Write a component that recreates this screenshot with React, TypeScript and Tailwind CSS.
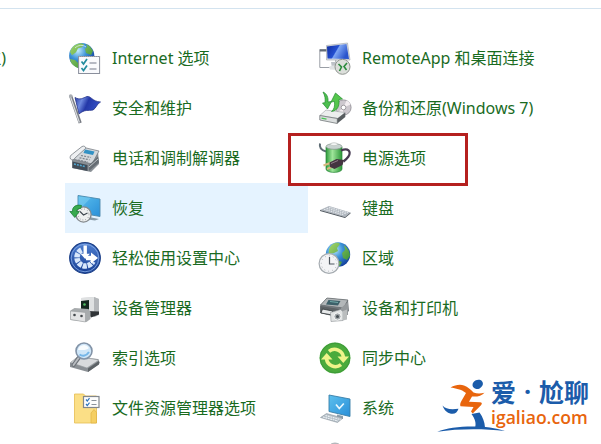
import type { ReactNode } from "react";

type Item = { label: string; icon: ReactNode; active?: boolean };

function Defs() {
  return (
    <svg className="absolute h-0 w-0" aria-hidden="true">
      <defs>
        <radialGradient id="ocean" cx="35%" cy="30%" r="75%">
          <stop offset="0" stopColor="#c4ecfc" />
          <stop offset="0.45" stopColor="#3d94d8" />
          <stop offset="1" stopColor="#123f9c" />
        </radialGradient>
        <linearGradient id="land" x1="0" y1="0" x2="1" y2="1">
          <stop offset="0" stopColor="#a5d66b" />
          <stop offset="1" stopColor="#2f8a35" />
        </linearGradient>
        <linearGradient id="flag" x1="0" y1="0" x2="1" y2="0.3">
          <stop offset="0" stopColor="#2338a0" />
          <stop offset="0.3" stopColor="#6f8be0" />
          <stop offset="0.55" stopColor="#2438a8" />
          <stop offset="1" stopColor="#3450c4" />
        </linearGradient>
        <linearGradient id="screen" x1="0" y1="0" x2="1" y2="1">
          <stop offset="0" stopColor="#5cc0ee" />
          <stop offset="1" stopColor="#2a8fd8" />
        </linearGradient>
        <linearGradient id="remote" x1="0" y1="0" x2="1" y2="0.4">
          <stop offset="0" stopColor="#0f2b9c" />
          <stop offset="0.5" stopColor="#2450d2" />
          <stop offset="0.55" stopColor="#7ea6f4" />
          <stop offset="1" stopColor="#2a55cc" />
        </linearGradient>
        <linearGradient id="cell" x1="0" y1="0" x2="1" y2="0">
          <stop offset="0" stopColor="#2c9a3a" />
          <stop offset="0.4" stopColor="#9fe59a" />
          <stop offset="1" stopColor="#2c9638" />
        </linearGradient>
        <linearGradient id="access" x1="0" y1="0" x2="0" y2="1">
          <stop offset="0" stopColor="#4f7fd0" />
          <stop offset="1" stopColor="#173f94" />
        </linearGradient>
      </defs>
    </svg>
  );
}

function Icon({ children }: { children: ReactNode }) {
  return (
    <svg viewBox="0 0 32 32" className="h-8 w-8 shrink-0 overflow-visible" fill="none">
      {children}
    </svg>
  );
}

const internet = (
  <Icon>
    <circle cx="12.700" cy="13.700" r="12.600" fill="url(#ocean)" />
    <path d="M1 10C3 4 7 1.6 12 1.2l3 1-2 3-4 1-2 4-4 3zM17 2l4 2.5 3 4.5-2 4-5-2-1-4 2-2zM1 17l5 1 4 4-1 4C4 24 1.500 21 1 17z" fill="url(#land)" />
    <path d="M6 6c3-3 8-3.500 11-1" stroke="#e2f6fc" strokeWidth="1" opacity="0.7" />
    <rect x="9.600" y="14.500" width="21" height="17" fill="#f9fafd" stroke="#8a8f9c" />
    <path d="M10 14.500h21" stroke="#a3a7b2" strokeDasharray="1 1" />
    <path d="M12.500 19.500l2 2.500 3.500-5M12.500 26l2 2.500 3.500-5" stroke="#238c9e" strokeWidth="1.700" />
    <path d="M20.500 21h7M20.500 27h7" stroke="#73798a" />
  </Icon>
);

const flag = (
  <Icon>
    <path d="M6 5.500c5 3 8 .5 12-1 4-.8 5 5 13.500 5.500-4 2-4 6-7.500 8-5 1-8-1-14 4z" fill="url(#flag)" stroke="#24338c" strokeWidth="0.800" />
    <path d="M1.700 4l9.500 27" stroke="#777b83" strokeWidth="3.200" />
    <path d="M1.400 4.500l9 26" stroke="#d9dcdf" strokeWidth="1.200" />
    <circle cx="1.700" cy="4" r="1.800" fill="#a9adb3" />
  </Icon>
);

const phone = (
  <Icon>
    <path d="M3 18l9-12 17 3 1 13-8 8-19-4z" fill="#8a9096" />
    <path d="M4 17L13 5l17 4-7 13z" fill="#d4d8dc" stroke="#70767d" strokeWidth="0.700" />
    <path d="M1.500 17c-1-2 0-4 2-5L13 4.500c2-1 4 0 3.500 2L6 16c-1 2-3 2.500-4.500 1z" fill="#eef0f2" stroke="#777d84" strokeWidth="0.800" />
    <path d="M16 7.500l9.500 2-1.500 3.500-9.500-2z" fill="#3291c4" />
    <path d="M12 13.500l10 2M10.500 15.800l10 2M9 18l10 2" stroke="#7c848c" strokeWidth="1.200" strokeDasharray="2 1.200" />
    <path d="M3.500 19.500l15 3.500v6l-15-3z" fill="#414c57" />
    <path d="M5 22l11 2.500" stroke="#52a7d0" strokeWidth="1.500" strokeDasharray="2 1" />
    <path d="M20 23l9-8.500 1 6-10 8.500z" fill="#666d74" />
    <path d="M20 25l9-8" stroke="#bfc4c8" />
  </Icon>
);

const recovery = (
  <Icon>
    <path d="M9 3.500l22 3.500v17.500L9 20.500z" fill="url(#screen)" stroke="#4a88ac" strokeWidth="0.900" />
    <path d="M9.500 4.500v14L22 5.800z" fill="#8bd8f5" opacity="0.45" />
    <path d="M20 25l10 2-4 1.500-7-1z" fill="#889ba8" />
    <circle cx="14.500" cy="22.500" r="7.600" fill="#eef0f0" stroke="#858a8e" strokeWidth="1.400" />
    <circle cx="14.500" cy="22.500" r="5.500" stroke="#777c80" strokeWidth="1" strokeDasharray="0.700 2.200" />
    <path d="M11 19.500l3.500 3.500 4-2" stroke="#3d454d" strokeWidth="1.100" />
    <path d="M12.500 13.500C7 12 3 15 3.500 19.500H.8l5 6 4.500-6H7.800c0-2 1.500-3.200 4-3z" fill="#38aa4e" stroke="#16772f" strokeWidth="0.700" />
  </Icon>
);

const easeOfAccess = (
  <Icon>
    <circle cx="16" cy="16" r="15.300" fill="url(#access)" stroke="#183c86" strokeWidth="1.200" />
    <circle cx="16" cy="16" r="13.800" stroke="#8cb0ea" strokeWidth="0.800" />
    <path d="M12.500 8A8.500 8.500 0 1 0 24 19.500" stroke="#d9e8fb" strokeWidth="5.500" strokeDasharray="4 0.900" />
    <path d="M14.500 3.500h3.400v8.200h3L16.200 17l-4.700-5.300h3z" fill="#fff" />
    <path d="M17 13.700h5v-3.200l7 5.500-7 5.500v-3.200h-5z" fill="#fff" />
  </Icon>
);

const deviceManager = (
  <Icon>
    <path d="M12 6l13-1 5 2v16l-4 2-14-2z" fill="#c9ccce" />
    <path d="M25 5l5 2v15l-5 3z" fill="#b4b7ba" />
    <path d="M12 6l13-1v16l-13 2z" fill="#dfe1e2" />
    <path d="M12 9l8-1v10h-8z" fill="#14281e" />
    <circle cx="15.500" cy="12.500" r="1.300" fill="#4fbe62" />
    <path d="M18 19l12 .5v3l-8 3z" fill="#303437" />
    <path d="M1.500 18.500l4-2.500 14 1 2 3v7l-4 3-16-2z" fill="#a7abad" />
    <path d="M1.500 19l15 1.500v9.500l-15-2.500z" fill="#e3e4e5" stroke="#8e9294" strokeWidth="0.500" />
    <circle cx="5.500" cy="23" r="1.300" fill="#44494d" />
    <circle cx="12.500" cy="24" r="1.300" fill="#44494d" />
  </Icon>
);

const indexing = (
  <Icon>
    <path d="M1 21l8-6 20 2 2 4-12 9L1 25z" fill="#8b9095" />
    <path d="M1.500 20.500L9 14.500l21 3.500-12 8z" fill="#d9dbdd" stroke="#93989c" strokeWidth="0.600" />
    <path d="M19 26.500l11-7.500v3.500L19 30z" fill="#5d6266" />
    <path d="M10 15.500l-5.500 7.500" stroke="#6e7379" strokeWidth="4" strokeLinecap="round" />
    <path d="M9.500 16l-5 7" stroke="#b9bdc1" strokeWidth="1.800" strokeLinecap="round" />
    <circle cx="15" cy="9" r="8" fill="#cfe6f8" stroke="#8293a7" strokeWidth="1.600" />
    <path d="M9 8a6 6 0 0 1 11-2c-3 3-7 1.500-11 2z" fill="#fff" opacity="0.850" />
    <path d="M10.500 12.500c3 2 7 1.500 9.500-2.500" stroke="#75b6e8" strokeWidth="2" />
  </Icon>
);

const folderOptions = (
  <Icon>
    <path d="M5.500 2h9l2 2h11v27H5.500z" fill="#fbdf86" stroke="#e6bd50" strokeWidth="0.800" />
    <path d="M22 31V21l3-3.500 2.500 3v10.500z" fill="#f5cf63" stroke="#dcae3e" strokeWidth="0.600" />
    <rect x="14.500" y="4.500" width="15.500" height="11" fill="#fdfdfd" stroke="#82878c" strokeWidth="1.200" />
    <path d="M17 7.500l1.300 1.500 2.200-2.800M17 12l1.300 1.500 2.200-2.800" stroke="#2f76ba" strokeWidth="1.200" />
    <path d="M22.500 8.500h5M22.500 12.500h5" stroke="#8b939b" />
  </Icon>
);

const remoteApp = (
  <Icon>
    <path d="M.8 7.500h16v18H.8z" fill="#fff" stroke="#8e949c" strokeWidth="0.900" />
    <path d="M.8 8.500h16" stroke="#646c77" strokeWidth="2" />
    <path d="M7.500 3.500L28.500 1l2.500 17-23.500 0z" fill="#d9dde3" stroke="#9ca2aa" strokeWidth="0.600" />
    <path d="M8 4.500L27.500 2l2.500 15-21.500-.5z" fill="url(#remote)" />
    <path d="M12 20h9l1 7-9-1z" fill="#bec2c8" />
    <path d="M10 25c3-2 7-2 10 0v3l-9-.5z" fill="#dfe1e3" />
    <circle cx="23.500" cy="24.800" r="7.500" fill="#dcdfdb" stroke="#909590" />
    <path d="M19.500 22l3 3-2 4M28 21l-3 3.500 2.500 3.500" stroke="#2a8a3c" strokeWidth="1.600" />
  </Icon>
);

const backup = (
  <Icon>
    <circle cx="24.500" cy="15.500" r="7.600" fill="#cdc8ce" stroke="#8c898f" strokeWidth="0.800" />
    <path d="M24.500 15.500l7-3a7.500 7.500 0 0 0-4-4zM24.500 15.500l-6 5a7 7 0 0 0 5 2.500z" fill="#f3edf0" />
    <circle cx="24.500" cy="15.500" r="2.300" fill="#fff" stroke="#8f8c91" strokeWidth="0.800" />
    <path d="M.8 23.500L7 18l19 2.500-7 6z" fill="#eceeee" stroke="#9ca0a2" strokeWidth="0.600" />
    <path d="M.8 23.500l17.500 3v5L.8 28z" fill="#dcdfdf" stroke="#72777a" strokeWidth="0.800" />
    <path d="M18.300 26.500l8-6v4.500L18.300 31.500z" fill="#585d60" />
    <path d="M2.500 26.200l5 1" stroke="#47c553" strokeWidth="1.300" />
    <path d="M4 0c4 1.500 5.500 6 5 10l3.500-.5-4 7.500-5-6 2.500-.3c.5-4 0-7-2-10.700z" fill="#4dbf4e" stroke="#228a2f" strokeWidth="0.700" />
    <path d="M12.500 19.500c2.500-2 3.500-5 3-10l-3.500.5L16.500 1l7 6-3.500.5c.5 7-1.500 11-7.500 12z" fill="#55c64d" stroke="#238c2f" strokeWidth="0.700" />
  </Icon>
);

const power = (
  <Icon>
    <path d="M1 1.500c-1 5 2 7 6 8" stroke="#5d6b73" strokeWidth="2" />
    <path d="M7 5v22c0 4.500 16 4.500 16 0V5z" fill="url(#cell)" stroke="#29883a" strokeWidth="0.700" />
    <ellipse cx="15" cy="4.500" rx="8" ry="2.800" fill="#c7d2cf" stroke="#829089" strokeWidth="0.700" />
    <ellipse cx="15" cy="2.200" rx="3.500" ry="1.500" fill="#f3f5f4" stroke="#a2aaa6" strokeWidth="0.500" />
    <path d="M22 8.500c7-3 10.500.5 7.500 6-1.500 2-3 3.500-5 5" stroke="#473a52" strokeWidth="2.200" />
    <path d="M4.500 23.500l8-3M8 27l7-3" stroke="#d8b880" strokeWidth="2" />
    <path d="M10.500 20.500l7-3.500 7.500 1-1.500 5-8 4-4.500-2z" fill="#443440" />
    <path d="M12 21.500l7-3" stroke="#927b89" />
  </Icon>
);

const keyboard = (
  <Icon>
    <path d="M1 18l9-4 21.500 6.500-5.500 4.500z" fill="#aeb5bd" />
    <path d="M1 18L26 25l5.500-4.500v1l-5.500 4.500-25-7z" fill="#4e565e" />
    <path d="M5 17.300l20 5.700M7.500 16.200l20 5.700M10 15.200l19 5.500" stroke="#e2e6ea" strokeWidth="1.100" strokeDasharray="1.600 0.700" />
  </Icon>
);

const region = (
  <Icon>
    <circle cx="19" cy="12.500" r="12.200" fill="url(#ocean)" />
    <path d="M14 2c3-2 6-1.500 7 0l-3 4 1 3-4 2-5 1c-1-4 1-8 4-10zM25 3c4 3 6 7 6 11l-3 4-4-2-1-5 3-3zM18 18l5 2-2 4h-3z" fill="url(#land)" />
    <circle cx="10" cy="21.500" r="9.900" fill="#f3f4f6" stroke="#a5abb0" strokeWidth="1.200" />
    <circle cx="10" cy="21.500" r="7.700" stroke="#969ba1" strokeWidth="1" strokeDasharray="0.700 3.300" />
    <path d="M10.500 15v7h5" stroke="#4e565e" strokeWidth="1.200" />
  </Icon>
);

const printer = (
  <Icon>
    <path d="M1 13.500L8 6l21 2 1 11-9 7-20-5z" fill="#777c80" />
    <path d="M1.500 13L8 6l21 2-4.500 8z" fill="#b3b7b9" stroke="#62676a" strokeWidth="0.700" />
    <path d="M9.500 8l12 1-2.500 4.500-12-1z" fill="#3d6069" />
    <path d="M11 9.500l8 1" stroke="#72aaa8" />
    <path d="M1.500 14l19 3v8l-19-4z" fill="#5d6265" />
    <path d="M3.500 17l10 2v4L2 21z" fill="#e8eaeb" stroke="#303638" strokeWidth="0.800" />
    <path d="M22 16l7-6v13h-7z" fill="#95999c" />
    <path d="M11.500 20.500l10-3 2.500 2v9l-12 1z" fill="#e2e4e4" stroke="#8b9093" strokeWidth="0.600" />
    <circle cx="18.500" cy="24.500" r="3.600" fill="#a3a8ab" stroke="#f5f6f6" />
    <circle cx="18.500" cy="24.500" r="1.500" fill="#454d52" />
    <path d="M24 19l4-1.500v10l-4 1z" fill="#babdbe" />
  </Icon>
);

const sync = (
  <Icon>
    <circle cx="16" cy="16" r="15.400" fill="#4bab3c" />
    <circle cx="16" cy="16" r="14.800" stroke="#3d9a3a" />
    <path d="M10 9.300A9 9 0 0 1 24.500 15.500" stroke="#f0f48a" strokeWidth="3.600" />
    <path d="M22 22.700A9 9 0 0 1 7.500 16.500" stroke="#f0f48a" strokeWidth="3.600" />
    <path d="M18.500 14.500h11.500l-5.700 6.500z" fill="#f0f48a" />
    <path d="M2 17.500h11.500L7.700 11z" fill="#f0f48a" />
  </Icon>
);

const system = (
  <Icon>
    <path d="M10 3l21 4v17.500L10 19.500z" fill="url(#screen)" stroke="#397fa8" strokeWidth="0.900" />
    <path d="M17 12.500l3.300 4 4.500-5" stroke="#e9f8ff" strokeWidth="1.700" />
    <path d="M18 22.500l6 1.500v3l-6-1z" fill="#8ca1ae" />
    <path d="M1.500 25.500l6-4L24 26 18.500 30.500z" fill="#b4bec6" stroke="#7c8992" strokeWidth="0.500" />
    <path d="M4 25l15 4M6.500 23.500l15 4" stroke="#edf2f5" strokeWidth="1.100" strokeDasharray="1.800 0.700" />
  </Icon>
);

const partial = (
  <Icon>
    <ellipse cx="16" cy="2.300" rx="4" ry="1.800" fill="#b4b8bc" />
  </Icon>
);

const leftItems: Item[] = [
  { label: "Internet 选项", icon: internet },
  { label: "安全和维护", icon: flag },
  { label: "电话和调制解调器", icon: phone },
  { label: "恢复", icon: recovery, active: true },
  { label: "轻松使用设置中心", icon: easeOfAccess },
  { label: "设备管理器", icon: deviceManager },
  { label: "索引选项", icon: indexing },
  { label: "文件资源管理器选项", icon: folderOptions },
];

const rightItems: Item[] = [
  { label: "RemoteApp 和桌面连接", icon: remoteApp },
  { label: "备份和还原(Windows 7)", icon: backup },
  { label: "电源选项", icon: power },
  { label: "键盘", icon: keyboard },
  { label: "区域", icon: region },
  { label: "设备和打印机", icon: printer },
  { label: "同步中心", icon: sync },
  { label: "系统", icon: system },
  { label: "", icon: partial },
];

function Column({ items }: { items: Item[] }) {
  return (
    <ul className="w-[243px] shrink-0">
      {items.map((item, i) => (
        <li
          key={i}
          className={`flex h-[50px] items-center gap-[11px] pl-1 ${item.active ? "bg-[#e5f3ff]" : ""}`}
        >
          {item.icon}
          <span className="whitespace-nowrap">{item.label}</span>
        </li>
      ))}
    </ul>
  );
}

function Watermark() {
  return (
    <div className="absolute top-[368px] left-[404px] flex h-[76px] w-[197px] bg-white pt-[10px] pl-8">
      <svg viewBox="0 0 70 56" className="h-14 w-[70px] shrink-0">
        <ellipse cx="41.700" cy="6.300" rx="5.300" ry="4.500" transform="rotate(-25 41.700 6.300)" fill="#1b5caa" />
        <path d="M14.500 9.500C19 7 24 6 28 7.500c4 1.500 6.500 4 9.500 7 3.500 1.200 7 1.200 11 .2-3 3-7 4.300-12.500 3.800l-3 5.200 11 .5c2 .3 2.500 1.300 1 3l-8.300 8.300-1.700-2 2.500-4.500-13-.8c-1-3 1-5 2.500-8l3-5.200C25 11 20 10.500 14.500 9.500z" fill="#e8650d" />
        <path d="M6.500 27.500c3 3.500 8 4.500 16 3.300-1 3-3 5-6 5-4 0-8-2.500-10-8.300z" fill="#1b5caa" />
        <path d="M35.500 36l8-1.500c3.500 5 5 9 5.500 15l-10 .5c1.500-5 0-9-3.500-14z" fill="#1b5caa" />
        <path d="M1.300 53.700C17 47.500 50 46.500 69 53 48 50.500 22 50.500 1.300 53.700z" fill="#1b5caa" />
      </svg>
      <div className="-ml-[15px] flex flex-col whitespace-nowrap">
        <div className="-mt-px flex h-[30px] w-[98px] justify-between font-['Noto_Sans_CJK_SC',sans-serif] text-[25px] leading-[29px] font-bold text-[#1b5caa]">
          <span>爱</span>
          <span className="w-3 text-center font-['Open_Sans',sans-serif]">·</span>
          <span>尬聊</span>
        </div>
        <div className="font-['Open_Sans',sans-serif] text-[17.600px] leading-[20px] font-semibold text-[#e8650d]">igaliao.com</div>
      </div>
    </div>
  );
}

export default function App() {
  return (
    <div className="relative h-[444px] w-[601px] overflow-hidden bg-white font-['Noto_Sans','Noto_Sans_CJK_SC',sans-serif] text-[16px] text-[#1a6b1f]">
      <Defs />
      <div className="h-[9px] border-b border-[#d3e3ef]" />

      <div className="flex pt-6">
        <div className="flex h-[50px] w-[65px] shrink-0 items-center">
          <span className="flex w-[6px] justify-end overflow-hidden whitespace-nowrap">位)</span>
        </div>
        <Column items={leftItems} />
        <div className="ml-[7px]">
          <Column items={rightItems} />
        </div>
      </div>

      {/* highlighted item */}
      <div className="absolute top-[133px] left-[288px] h-[53px] w-[180px] border-3 border-[#b5201f]" />

      <Watermark />
    </div>
  );
}
